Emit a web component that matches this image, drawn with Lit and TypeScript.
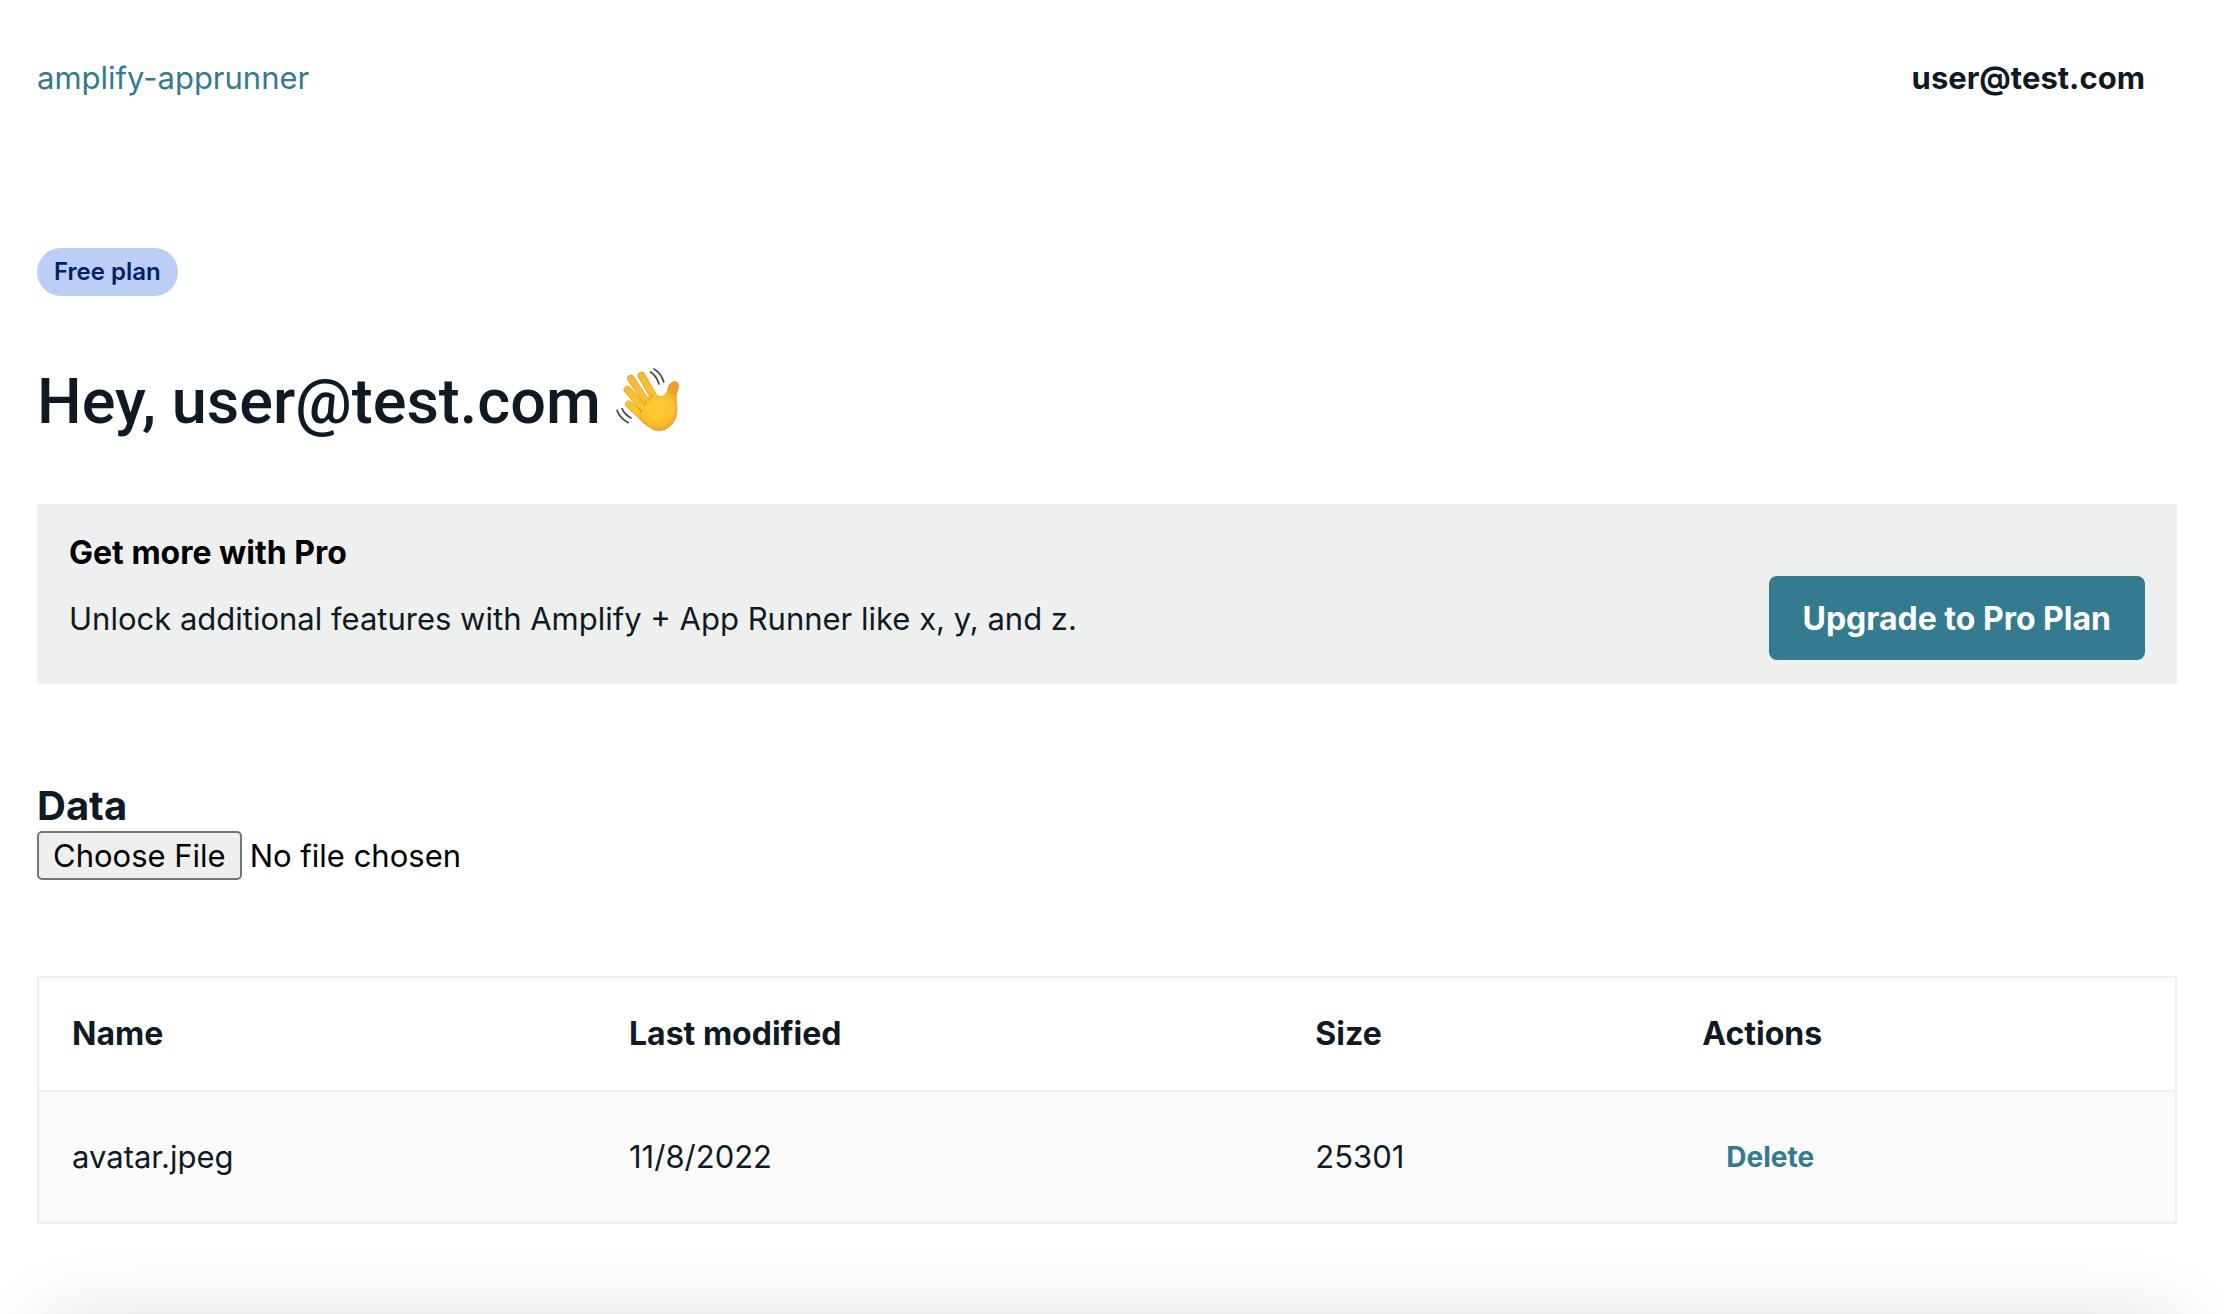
import { LitElement, html, css, svg } from "lit";
import { customElement, state } from "lit/decorators.js";

interface StoredFile {
  name: string;
  modified: string;
  size: number;
}

@customElement("wave-icon")
class WaveIcon extends LitElement {
  static styles = css`
    :host {
      display: flex;
      align-items: center;
      height: 80px;
    }
    .wave {
      width: 66px;
      height: 66px;
    }
  `;

  private finger(d: string) {
    return svg`
      <path d=${d} fill="none" stroke="#d98f1c" stroke-width="22" stroke-linecap="round" />
      <path d=${d} fill="none" stroke="url(#skin)" stroke-width="19" stroke-linecap="round" />
    `;
  }

  render() {
    return html`
      <svg class="wave" viewBox="31 36 198 198" role="img" aria-label="waving hand">
        <defs>
          <linearGradient id="skin" gradientUnits="userSpaceOnUse" x1="90" y1="60" x2="180" y2="230">
            <stop offset="0" stop-color="#f9b934" />
            <stop offset="0.5" stop-color="#fcc52f" />
            <stop offset="1" stop-color="#f2a024" />
          </linearGradient>
          <radialGradient id="palm" gradientUnits="userSpaceOnUse" cx="158" cy="160" r="72">
            <stop offset="0" stop-color="#fecd35" />
            <stop offset="0.65" stop-color="#fcc12f" />
            <stop offset="1" stop-color="#ee9c22" />
          </radialGradient>
        </defs>
        <path
          d="M138 118C152 118 160 126 171 125C182 123 187 112 190 100C193 86 201 79 212 80C222 82 225 90 221 100C216 113 213 122 215 138C219 165 218 188 203 206C187 226 163 232 143 222C124 212 108 196 94 180Z"
          fill="url(#palm)"
          stroke="#e2951f"
          stroke-width="2"
        />
        ${this.finger("M73 148L122 194")}
        ${this.finger("M68 104L128 174")}
        ${this.finger("M79 71L138 160")}
        ${this.finger("M110 61L152 134")}
        <path
          d="M143 124C152 121 161 129 173 127C184 124 190 112 193 101L208 130L213 158C216 184 206 202 191 214C174 225 156 226 142 218C130 210 116 199 106 188C112 184 112 175 108 168C117 170 124 160 120 150C134 154 146 136 143 124Z"
          fill="url(#palm)"
        />
        <path d="M141 118Q146 122 141 127M122 139Q127 144 121 149M106 162Q112 167 107 173" fill="none" stroke="#d98f1c" stroke-width="3" stroke-linecap="round" />
        <g fill="none" stroke="#48484a" stroke-width="5" stroke-linecap="round">
          <path d="M148 42Q170 55 177 81" />
          <path d="M138 51Q156 64 163 87" />
          <path d="M37 166Q46 190 71 203" />
          <path d="M52 161Q60 179 79 189" />
        </g>
      </svg>
    `;
  }
}

@customElement("app-root")
class AppRoot extends LitElement {
  static styles = css`
    :host {
      display: block;
      min-height: 100vh;
      box-sizing: border-box;
      padding: 0 47px 0 37px;
      overflow: hidden;
      background: #fff;
      color: #0f1a25;
      font-family: Inter, "Liberation Sans", sans-serif;
      font-size: 31px;
      line-height: 48px;
    }
    h1,
    h2,
    p {
      margin: 0;
    }
    .top {
      display: flex;
      align-items: center;
      justify-content: space-between;
      padding: 54px 32px 0 0;
    }
    .brand {
      color: #347a91;
      text-decoration: none;
    }
    .user {
      font-weight: 700;
    }
    .badge {
      display: inline-block;
      margin-top: 146px;
      padding: 0 17px;
      border-radius: 24px;
      background: #bbcef6;
      color: #012163;
      font-size: 24px;
      font-weight: 600;
    }
    .greeting {
      display: flex;
      align-items: flex-start;
      gap: 14px;
      margin-top: 64px;
      font-family: Roboto, Inter, sans-serif;
      font-size: 63px;
      font-weight: 500;
      line-height: 84px;
    }
    .promo {
      display: flex;
      align-items: flex-end;
      justify-content: space-between;
      gap: 32px;
      margin-top: 60px;
      padding: 25px 32px 24px;
      background: #eef0ef;
    }
    .promo-text {
      display: grid;
      gap: 18px;
      padding-bottom: 17px;
    }
    .promo-title {
      color: #000;
      font-size: 32px;
      font-weight: 700;
    }
    .upgrade {
      padding: 19px 34px 17px;
      border: 0;
      border-radius: 8px;
      background: #347a91;
      color: #fff;
      font: inherit;
      font-size: 32px;
      font-weight: 700;
    }
    .section-title {
      display: block;
      margin-top: 97px;
      font-size: 40px;
      font-weight: 700;
      line-height: 50px;
    }
    .picker {
      display: block;
      color: #000;
      font: inherit;
      line-height: 48px;
    }
    .picker::file-selector-button {
      margin: 0 8px 0 0;
      padding: 0 14px;
      border: 2px solid #767676;
      border-radius: 5px;
      background: #efefef;
      color: #000;
      font: inherit;
      line-height: 45px;
    }
    .files {
      width: 100%;
      margin-top: 96px;
      border: 2px solid #efefef;
      border-collapse: collapse;
      table-layout: fixed;
      text-align: left;
    }
    .files th,
    .files td {
      box-sizing: border-box;
      padding: 32px 33px;
      border-bottom: 2px solid #efefef;
    }
    .files th {
      font-size: 32px;
    }
    .files td {
      padding: 24px 33px;
      background: #fafafa;
    }
    .c-name {
      width: 26.1%;
    }
    .c-date {
      width: 32.1%;
    }
    .c-size {
      width: 18.1%;
    }
    .delete {
      display: block;
      padding: 17px 24px;
      border: 0;
      background: none;
      color: #347a91;
      font: inherit;
      font-size: 28px;
      font-weight: 700;
    }
    .dock-shade {
      position: fixed;
      right: 50px;
      bottom: -80px;
      left: 50px;
      height: 60px;
      border-radius: 24px;
      box-shadow: 0 0 80px 10px rgba(0, 0, 0, 0.16);
      pointer-events: none;
    }
  `;

  @state() private email = "user@test.com";
  @state() private files: StoredFile[] = [{ name: "avatar.jpeg", modified: "11/8/2022", size: 25301 }];

  private remove(file: StoredFile) {
    this.files = this.files.filter((f) => f !== file);
  }

  render() {
    return html`
      <header class="top">
        <a class="brand" href="#">amplify-apprunner</a>
        <span class="user">${this.email}</span>
      </header>
      <main>
        <span class="badge">Free plan</span>
        <h1 class="greeting"><span>Hey, ${this.email}</span><wave-icon></wave-icon></h1>
        <section class="promo">
          <div class="promo-text">
            <h2 class="promo-title">Get more with Pro</h2>
            <p>Unlock additional features with Amplify + App Runner like x, y, and z.</p>
          </div>
          <button class="upgrade" type="button">Upgrade to Pro Plan</button>
        </section>
        <label class="section-title" for="upload">Data</label>
        <input class="picker" id="upload" type="file" />
        <table class="files">
          <thead>
            <tr>
              <th class="c-name" scope="col">Name</th>
              <th class="c-date" scope="col">Last modified</th>
              <th class="c-size" scope="col">Size</th>
              <th scope="col">Actions</th>
            </tr>
          </thead>
          <tbody>
            ${this.files.map(
              (file) => html`
                <tr>
                  <td>${file.name}</td>
                  <td>${file.modified}</td>
                  <td>${file.size}</td>
                  <td><button class="delete" type="button" @click=${() => this.remove(file)}>Delete</button></td>
                </tr>
              `
            )}
          </tbody>
        </table>
      </main>
      <div class="dock-shade"></div>
    `;
  }
}
